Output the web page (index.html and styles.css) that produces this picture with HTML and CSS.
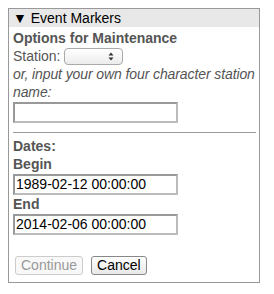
FILE: index.html
```html
<!DOCTYPE html>
<html>
<head>
<meta charset="utf-8">
<link rel="stylesheet" href="styles.css">
</head>
<body>
<div class="panel">
  <div class="header">▼ Event Markers</div>
  <div class="content">
    <div class="title">Options for Maintenance</div>
    <div class="row">Station: <span class="select"><span class="arrows"><svg width="6" height="9" viewBox="0 0 6 9"><path d="M3 0.5 L5.5 3.5 H0.5 Z M3 8.5 L5.5 5.5 H0.5 Z" fill="#333"/></svg></span></span></div>
    <div class="hint">or, input your own four character station name:</div>
    <div class="input"></div>
    <div class="rule"></div>
    <div class="title">Dates:</div>
    <div class="title">Begin</div>
    <div class="input">1989-02-12 00:00:00</div>
    <div class="title">End</div>
    <div class="input">2014-02-06 00:00:00</div>
    <div class="buttons">
      <span class="btn disabled">Continue</span>
      <span class="btn">Cancel</span>
    </div>
  </div>
</div>
</body>
</html>
```
FILE: styles.css
```css
html, body { margin: 0; padding: 0; background: #fff; }
body { padding: 8px; font-family: "Liberation Sans", Arial, sans-serif; font-size: 14px; }
.panel { width: 250px; border: 1px solid #999; }
.header { background: #e8e8e8; height: 18px; line-height: 18px; padding-left: 4px; color: #000; }
.content { padding: 2px 2px 7px 4px; color: #555; line-height: 18px; }
.title { font-weight: bold; }
.row { display: flex; align-items: center; height: 18px; }
.select { display: inline-block; margin-left: 4px; width: 57px; height: 15px; border: 1px solid #aaa; border-radius: 4px; background: linear-gradient(#fff, #ececec); position: relative; }
.arrows { position: absolute; right: 8px; top: 3px; line-height: 0; }
.hint { font-style: italic; letter-spacing: -0.1px; }
.input { width: 160px; height: 17px; border: 2px solid #bbb; border-top-color: #999; border-left-color: #999; color: #000; line-height: 17px; padding-left: 1px; margin-top: 1px; }
.rule { border-top: 1px solid #999; margin: 9px 1px 4px 0; }
.buttons { display: flex; gap: 8px; margin-top: 21px; padding-left: 2px; }
.btn { border: 1px solid #888; border-radius: 3px; background: linear-gradient(#fff, #e8e8e8); color: #000; height: 17px; line-height: 17px; padding: 0 5px; font-size: 14px; }
.btn.disabled { color: #999; border-color: #ccc; background: #f8f8f8; }
```
